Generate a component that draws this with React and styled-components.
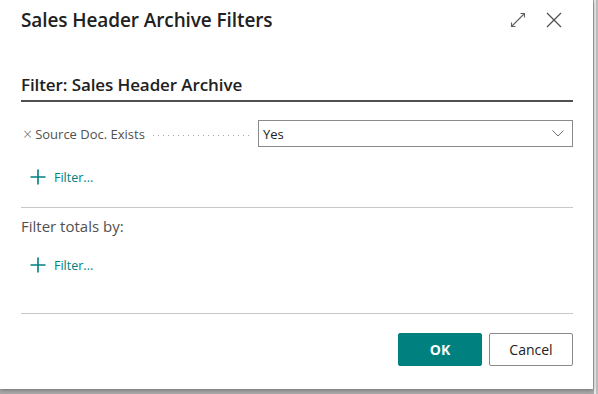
import React from 'react';
import styled, { createGlobalStyle } from 'styled-components';

const GlobalStyle = createGlobalStyle`
  html, body {
    margin: 0;
    padding: 0;
    background: #a9a9a9;
    font-family: "Open Sans", "Noto Sans", sans-serif;
    color: #212121;
  }
`;

const Backdrop = styled.div`
  width: 598px;
  height: 394px;
  overflow: hidden;
  background: linear-gradient(to right, transparent 594px, #e9e9e9 594px, #e9e9e9 596px, #bdbdbd 596px);
`;

const Dialog = styled.div`
  width: 593px;
  height: 389px;
  background: #fff;
  box-shadow: 0 1px 4px rgba(0, 0, 0, 0.35);
  display: flex;
  flex-direction: column;
  box-sizing: border-box;
  padding: 0 20px 0 21px;
`;

const Header = styled.div`
  display: flex;
  align-items: center;
  height: 39px;
  padding-right: 11px;
`;

const Title = styled.h1`
  flex: 1;
  margin: 0;
  font-size: 19px;
  font-weight: 600;
  letter-spacing: -0.1px;
  color: #212121;
`;

const IconButton = styled.button`
  border: none;
  background: none;
  padding: 0;
  margin-left: ${({ $gap }) => $gap || 0}px;
  width: 16px;
  height: 16px;
  display: flex;
  cursor: pointer;
`;

const SectionTitle = styled.h2`
  margin: 34px 0 0;
  font-size: 17px;
  font-weight: 600;
  letter-spacing: -0.1px;
  color: #212121;
  padding-bottom: 4px;
  border-bottom: 2px solid #505050;
`;

const FilterRow = styled.div`
  display: flex;
  align-items: center;
  margin-top: 18px;
  height: 27px;
`;

const FieldLabel = styled.div`
  display: flex;
  align-items: center;
  width: 237px;
  font-size: 13px;
  color: #505050;
`;

const RemoveMark = styled.span`
  font-size: 16px;
  font-weight: 300;
  line-height: 1;
  color: #707070;
  margin: 0 3px 0 2px;
`;

const Leader = styled.span`
  flex: 1;
  height: 1px;
  margin: 3px 8px 0 8px;
  background-image: linear-gradient(to right, #a6a6a6 1px, transparent 1px);
  background-size: 5px 1px;
`;

const Select = styled.div`
  flex: 1;
  height: 27px;
  box-sizing: border-box;
  border: 1px solid #8a8a8a;
  display: flex;
  align-items: center;
  justify-content: space-between;
  padding: 0 8px 0 4px;
  font-size: 13px;
  color: #212121;
`;

const AddFilter = styled.button`
  display: flex;
  align-items: center;
  gap: 8px;
  border: none;
  background: none;
  padding: 0 0 0 9px;
  margin-top: ${({ $top }) => $top}px;
  height: 20px;
  font-family: inherit;
  font-size: 12.5px;
  color: #00807f;
  cursor: pointer;
`;

const Divider = styled.hr`
  border: none;
  border-top: 1px solid #c8c8c8;
  margin: ${({ $top }) => $top}px 0 0;
`;

const Caption = styled.div`
  margin-top: 8px;
  font-size: 15px;
  color: #505050;
`;

const Footer = styled.div`
  display: flex;
  justify-content: flex-end;
  gap: 7px;
  margin-top: 19px;
`;

const Button = styled.button`
  width: 84px;
  height: 33px;
  box-sizing: border-box;
  border-radius: 2px;
  font-family: inherit;
  font-size: 14px;
  font-weight: ${({ $primary }) => ($primary ? 700 : 400)};
  color: ${({ $primary }) => ($primary ? '#fff' : '#212121')};
  background: ${({ $primary }) => ($primary ? '#00807f' : '#fff')};
  border: 1px solid ${({ $primary }) => ($primary ? '#00807f' : '#8a8a8a')};
  cursor: pointer;
`;

const ExpandIcon = () => (
  <svg width="16" height="16" viewBox="0 0 16 16" fill="none" stroke="#606060" strokeWidth="1.1">
    <path d="M1.5 14.5 L14.5 1.5" />
    <path d="M10.5 1.5 H14.5 V5.5" />
    <path d="M1.5 10.5 V14.5 H5.5" />
  </svg>
);

const CloseIcon = () => (
  <svg width="16" height="16" viewBox="0 0 16 16" fill="none" stroke="#505050" strokeWidth="1.3">
    <path d="M1 1 L15 15 M15 1 L1 15" />
  </svg>
);

const PlusIcon = () => (
  <svg width="16" height="16" viewBox="0 0 16 16" fill="none" stroke="#00807f" strokeWidth="1.6">
    <path d="M8 0.5 V15.5 M0.5 8 H15.5" />
  </svg>
);

const Chevron = () => (
  <svg width="12" height="7" viewBox="0 0 12 7" fill="none" stroke="#707070" strokeWidth="1">
    <path d="M0.5 0.5 L6 6 L11.5 0.5" />
  </svg>
);

export default function App() {
  return (
    <Backdrop>
      <GlobalStyle />
      <Dialog>
        <Header>
          <Title>Sales Header Archive Filters</Title>
          <IconButton aria-label="Expand"><ExpandIcon /></IconButton>
          <IconButton $gap={20} aria-label="Close"><CloseIcon /></IconButton>
        </Header>

        <SectionTitle>Filter: Sales Header Archive</SectionTitle>

        <FilterRow>
          <FieldLabel>
            <RemoveMark>×</RemoveMark>
            Source Doc. Exists
            <Leader />
          </FieldLabel>
          <Select>
            <span>Yes</span>
            <Chevron />
          </Select>
        </FilterRow>

        <AddFilter $top={20}><PlusIcon />Filter...</AddFilter>

        <Divider $top={20} />

        <Caption>Filter totals by:</Caption>

        <AddFilter $top={19}><PlusIcon />Filter...</AddFilter>

        <Divider $top={38} />

        <Footer>
          <Button $primary>OK</Button>
          <Button>Cancel</Button>
        </Footer>
      </Dialog>
    </Backdrop>
  );
}
